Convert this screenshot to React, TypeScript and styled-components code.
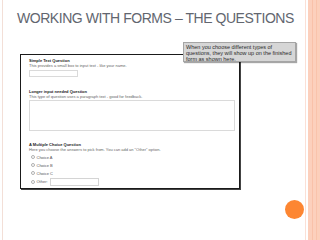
import React from "react";
import styled, { createGlobalStyle } from "styled-components";

const Global = createGlobalStyle`
  html, body { margin: 0; padding: 0; background: #fff; }
  body {
    width: 320px; height: 240px; overflow: hidden;
    font-family: "Liberation Sans", Arial, sans-serif;
  }
`;

const Slide = styled.div`
  display: flex;
  width: 320px;
  height: 240px;
  background: #fff;
`;

const Main = styled.div`
  flex: 1;
  margin-left: 2px;
  border-left: 1px solid #f3dfd7;
  display: flex;
  flex-direction: column;
`;

const RightBar = styled.div`
  width: 15px;
  background: linear-gradient(
    to right,
    #fbe0d6 0 1px,
    #fff 1px 3px,
    #fcd0bd 3px 7px,
    #f9c1a9 7px 8px,
    #fcd0bd 8px 11px,
    #f9c3ab 11px 12px,
    #fccfbb 12px
  );
`;

const Title = styled.h1`
  margin: 10px 0 0 0;
  padding-left: 14px;
  font-size: 14px;
  line-height: 16px;
  font-weight: normal;
  letter-spacing: -0.45px;
  color: #62666f;
  white-space: nowrap;
`;

const FormBox = styled.div`
  position: relative;
  margin: 28px 0 0 17px;
  width: 220px;
  height: 135px;
  box-sizing: border-box;
  border: 1px solid #1a1a1a;
  box-shadow: 1px 1px 0 #444;
  padding: 3px 0 0 8px;
  background: #fff;
`;

const Question = styled.div<{ $top: number }>`
  margin-top: ${(p) => p.$top}px;
`;

const QTitle = styled.div`
  font-size: 4px;
  line-height: 5px;
  font-weight: bold;
  color: #222;
  white-space: nowrap;
`;

const QDesc = styled.div`
  font-size: 4px;
  line-height: 5px;
  color: #666;
  white-space: nowrap;
`;

const TextBox = styled.div<{ $w: number; $h: number; $mt: number }>`
  margin-top: ${(p) => p.$mt}px;
  width: ${(p) => p.$w}px;
  height: ${(p) => p.$h}px;
  box-sizing: border-box;
  border: 1px solid #dadada;
  background: #fff;
`;

const Choices = styled.div`
  margin-top: 1.5px;
  display: flex;
  flex-direction: column;
`;

const Choice = styled.div<{ $h: number }>`
  height: ${(p) => p.$h}px;
  display: flex;
  align-items: center;
  gap: 1.5px;
  padding-left: 2px;
  font-size: 4px;
  color: #555;
  white-space: nowrap;
`;

const Radio = styled.span`
  width: 4px;
  height: 4px;
  box-sizing: border-box;
  border: 1px solid #b0b0b0;
  border-radius: 50%;
  background: #fff;
  flex: none;
`;

const OtherInput = styled.span`
  margin-left: 1px;
  width: 49px;
  height: 8px;
  box-sizing: border-box;
  border: 1px solid #d4d4d4;
  background: #fff;
`;

const Callout = styled.div`
  position: absolute;
  left: 162px;
  top: -13px;
  width: 113px;
  height: 20px;
  box-sizing: border-box;
  background: #d6d6d6;
  border: 1px solid #a5a5a5;
  box-shadow: 1px 1px 1px rgba(0, 0, 0, 0.35);
  padding: 0.5px 2px;
  font-size: 5.5px;
  line-height: 6px;
  color: #2a2a2a;
`;

const Dot = styled.div`
  align-self: flex-end;
  margin: 11px 1px 0 0;
  width: 19px;
  height: 19px;
  border-radius: 50%;
  background: #fd8632;
`;

export default function App() {
  return (
    <>
      <Global />
      <Slide>
        <Main>
          <Title>WORKING WITH FORMS – THE QUESTIONS</Title>
          <FormBox>
            <Question $top={0}>
              <QTitle>Simple Text Question</QTitle>
              <QDesc>This provides a small box to input text - like your name.</QDesc>
              <TextBox $w={49} $h={7} $mt={2} />
            </Question>
            <Question $top={12}>
              <QTitle>Longer input needed Question</QTitle>
              <QDesc>This type of question uses a paragraph text - good for feedback.</QDesc>
              <TextBox $w={206} $h={31} $mt={1} />
            </Question>
            <Question $top={10.5}>
              <QTitle>A Multiple Choice Question</QTitle>
              <QDesc>
                Here you choose the answers to pick from. You can add an "Other" option.
              </QDesc>
              <Choices>
                <Choice $h={8}><Radio />Choice A</Choice>
                <Choice $h={8}><Radio />Choice B</Choice>
                <Choice $h={8}><Radio />Choice C</Choice>
                <Choice $h={9}><Radio />Other:<OtherInput /></Choice>
              </Choices>
            </Question>
            <Callout>
              When you choose different types of questions, they will show up on the finished
              form as shown here.
            </Callout>
          </FormBox>
          <Dot />
        </Main>
        <RightBar />
      </Slide>
    </>
  );
}
